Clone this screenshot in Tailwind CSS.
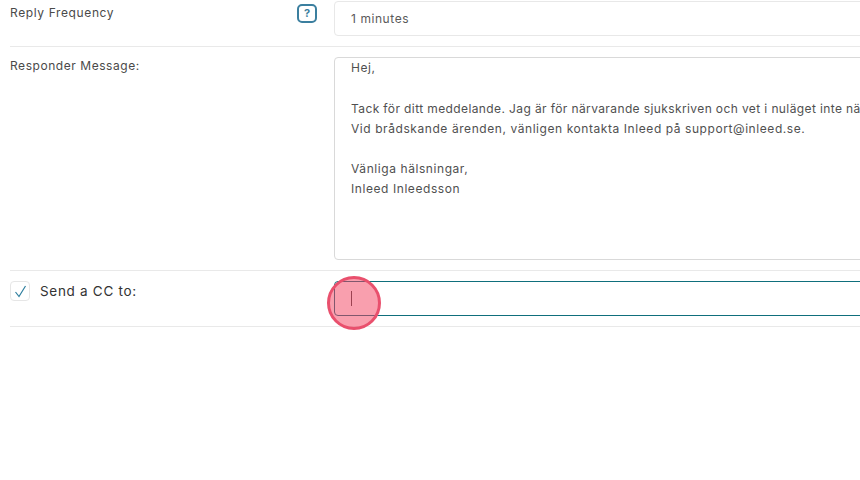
<!DOCTYPE html>
<html lang="en">
<head>
  <meta charset="UTF-8" />
  <title>Autoresponder</title>
  <script src="https://cdn.jsdelivr.net/npm/@tailwindcss/browser@4"></script>
</head>
<body class="bg-white font-['Inter',sans-serif] text-[#444] overflow-hidden">
  <div class="relative w-[860px] h-[480px] overflow-hidden pl-[10px]">
    <!-- Reply frequency -->
    <div class="flex h-[47px] border-b border-[#e9e9e9] w-[870px]">
      <div class="w-[287px] shrink-0 pt-[5px] text-[12px] leading-4 tracking-[0.62px] text-[#4a4a4a]">Reply Frequency</div>
      <div class="w-[37px] shrink-0 pt-[4px]">
        <div class="w-[20px] h-[19px] border-2 border-[#3b7f9f] rounded-[5px] flex items-center justify-center text-[11px] font-bold text-[#3b7f9f]">?</div>
      </div>
      <div class="w-[560px] shrink-0 h-[35px] mt-px border border-[#e8e8e8] rounded-[4px] pl-[16px] flex items-center text-[12px] tracking-[0.57px] text-[#5a5a5a]">1 minutes</div>
    </div>

    <!-- Message -->
    <div class="flex h-[224px] border-b border-[#e9e9e9] pt-[10px] w-[870px]">
      <div class="w-[324px] shrink-0 pt-[1px] text-[12px] leading-4 tracking-[0.55px] text-[#4a4a4a]">Responder Message:</div>
      <div class="w-[560px] shrink-0 h-[203px] border border-[#d9d9d9] rounded-[4px] pl-[16px] text-[12px] leading-[20px] tracking-[0.57px] text-[#505050] whitespace-pre overflow-hidden"><div>Hej,</div><div class="mt-[21px] tracking-[0.39px]">Tack för ditt meddelande. Jag är för närvarande sjukskriven och vet i nuläget inte när jag är tillbaka.</div><div>Vid brådskande ärenden, vänligen kontakta Inleed på support@inleed.se.</div><div class="mt-5">Vänliga hälsningar,</div><div>Inleed Inleedsson</div></div>
    </div>

    <!-- CC -->
    <div class="flex h-[56px] border-b border-[#e9e9e9] pt-[10px] w-[870px]">
      <div class="w-[324px] shrink-0 flex items-start gap-[10px]">
        <div class="w-[20px] h-[20px] border border-[#e6e6e6] rounded-[4px] flex items-center justify-center">
          <svg width="14" height="14" viewBox="0 0 14 14" fill="none" stroke="#2f7f9f" stroke-width="1.2"><path d="M2.5 8 6 12.5 12.5 2" /></svg>
        </div>
        <span class="text-[13.5px] leading-5 tracking-[0.7px] text-[#333]">Send a CC to:</span>
      </div>
      <div class="w-[560px] shrink-0 h-[35px] border border-[#0f6f7c] rounded-[4px] pl-[16px] flex items-center">
        <div class="w-px h-[15px] bg-[#444]"></div>
      </div>
    </div>

    <!-- click marker -->
    <div class="absolute left-[327px] top-[276px] w-[54px] h-[54px] rounded-full bg-[#f43f5e]/50 border-[3px] border-[#e9506d]"></div>
  </div>
</body>
</html>
